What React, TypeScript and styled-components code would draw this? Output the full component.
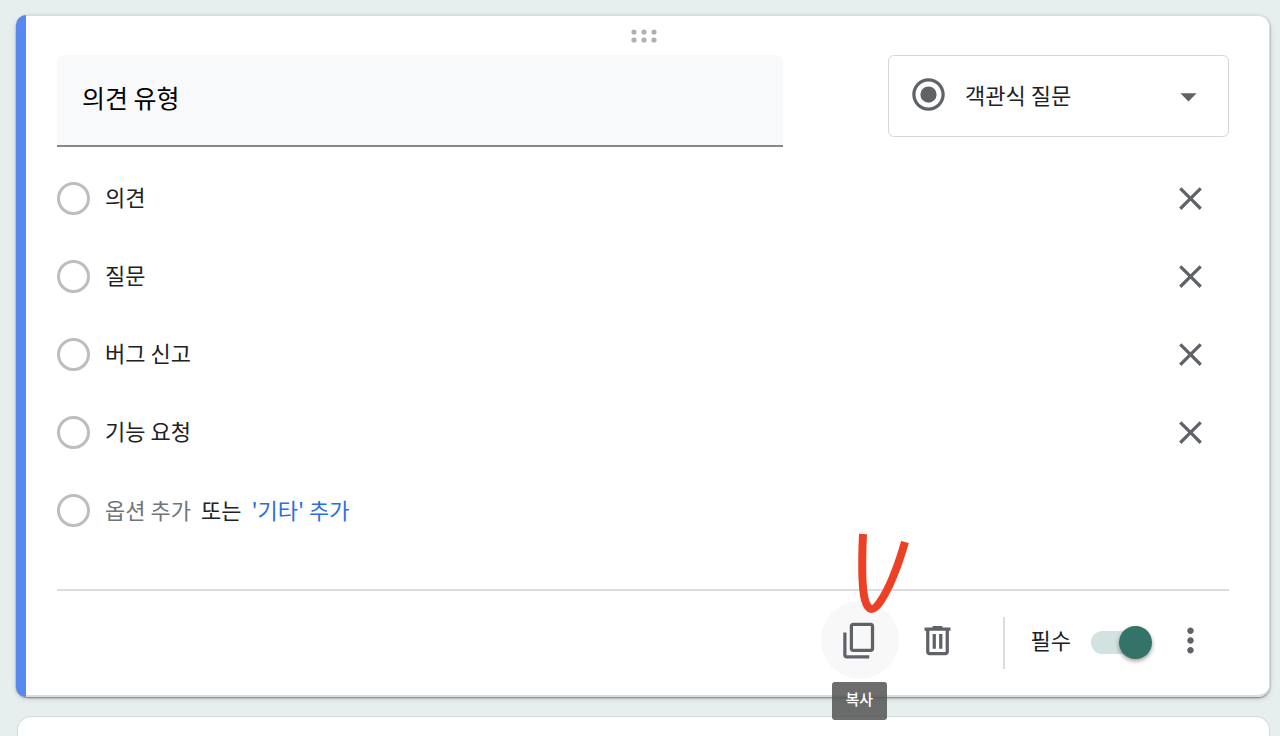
import React, { useState } from "react";
import styled, { createGlobalStyle } from "styled-components";

const GlobalStyle = createGlobalStyle`
  *, *::before, *::after { box-sizing: border-box; }
  body {
    margin: 0;
    background: #e7efee;
    color: #202124;
    font-family: "Noto Sans CJK KR", "Noto Sans", sans-serif;
    font-size: 22px;
    line-height: 32px;
  }
  button, input, select { font: inherit; color: inherit; margin: 0; }
`;

const Page = styled.main`
  display: flex;
  flex-direction: column;
  gap: 19px;
  min-height: 100vh;
  padding: 15px 10px 0 16px;
`;

const Card = styled.section`
  display: flex;
  border-radius: 12px;
  box-shadow: 0 1px 2px rgba(0, 0, 0, 0.45), 0 2px 6px rgba(0, 0, 0, 0.12);
`;

const Stripe = styled.div`
  flex: none;
  width: 10px;
  border-radius: 12px 0 0 12px;
  background: #5688ef;
`;

const CardBody = styled.div`
  flex: 1;
  min-width: 0;
  padding: 0 40px 16px 31px;
  background: #fff;
  border: solid #dadce0;
  border-width: 1px 1px 2px 0;
  border-radius: 0 12px 12px 0;
`;

const NextCard = styled.section`
  flex: 1;
  background: #fff;
  border: 1px solid #d5d9da;
  border-bottom: 0;
  border-radius: 14px 14px 0 0;
  margin-left: 1px;
`;

const DragHandle = styled.div`
  display: flex;
  justify-content: center;
  height: 39px;
  padding: 12px 0 0 2px;
`;

const QuestionRow = styled.div`
  display: flex;
  align-items: flex-start;
  gap: 105px;
`;

const TitleInput = styled.input`
  flex: 1;
  min-width: 0;
  height: 92px;
  padding: 0 25px 6px;
  border: 0;
  border-bottom: 2px solid #85888c;
  border-radius: 6px 6px 0 0;
  outline: 0;
  background: #f8f9fa;
  color: #000;
  font-size: 25px;
`;

const TypePicker = styled.div`
  display: grid;
  flex: none;
  width: 341px;
  align-items: center;

  > * { grid-area: 1 / 1; }
  > svg { margin: 0 21px 3px; pointer-events: none; }
  > svg:last-child { justify-self: end; margin-bottom: 0; }
`;

const TypeSelect = styled.select`
  width: 100%;
  height: 82px;
  padding: 0 60px 4px 76px;
  appearance: none;
  border: 1px solid #d5d7db;
  border-radius: 6px;
  background: #fff;
`;

const OptionList = styled.ul`
  margin: 12px 0 40px;
  padding: 0;
  list-style: none;
`;

const OptionRow = styled.li`
  display: flex;
  align-items: center;
  height: 78px;
`;

const Radio = styled.input`
  flex: none;
  width: 33px;
  height: 33px;
  appearance: none;
  border: 3px solid #bdbdbd;
  border-radius: 50%;
`;

const OptionInput = styled.input`
  flex: 1;
  min-width: 0;
  height: 40px;
  margin-left: 15px;
  padding: 0 0 4px;
  border: 0;
  outline: 0;
  background: none;
`;

const AddOptions = styled.div`
  display: flex;
  gap: 10px;
  margin-left: 15px;
  padding-bottom: 2px;
`;

const TextButton = styled.button<{ $tone: string }>`
  padding: 0;
  border: 0;
  background: none;
  color: ${(p) => p.$tone};
  cursor: pointer;
`;

const IconButton = styled.button<{ $active?: boolean }>`
  display: flex;
  flex: none;
  align-items: center;
  justify-content: center;
  width: 78px;
  height: 78px;
  padding: 0;
  border: 0;
  border-radius: 50%;
  background: ${(p) => (p.$active ? "#f8f8f8" : "none")};
  cursor: pointer;
`;

const Footer = styled.footer`
  display: flex;
  align-items: center;
  justify-content: flex-end;
  padding-top: 10px;
  border-top: 2px solid #dadce0;
`;

const CopyWrap = styled.div`
  position: relative;
`;

const Tooltip = styled.span`
  position: absolute;
  top: 81px;
  left: 11px;
  z-index: 1;
  padding: 1px 14px 5px;
  border-radius: 3px;
  background: rgba(84, 84, 84, 0.85);
  color: #fff;
  font-size: 15px;
  font-weight: 500;
  white-space: nowrap;
`;

const PenMark = styled.svg`
  position: absolute;
  top: -71px;
  left: 29px;
  z-index: 1;
  pointer-events: none;
`;

const Separator = styled.div`
  width: 2px;
  height: 52px;
  margin: 6px 26px 0;
  background: #dadce0;
`;

const RequiredLabel = styled.label`
  display: flex;
  align-items: center;
  gap: 20px;
`;

const Switch = styled.input`
  display: flex;
  align-items: center;
  width: 60px;
  height: 33px;
  appearance: none;

  &::before {
    content: "";
    flex: none;
    width: 50px;
    height: 23px;
    border-radius: 12px;
    background: #d1e2e0;
  }
  &::after {
    content: "";
    flex: none;
    width: 33px;
    height: 33px;
    margin-left: ${(p) => (p.checked ? "-22px" : "-50px")};
    border-radius: 50%;
    background: #33736a;
    box-shadow: 0 2px 4px rgba(0, 0, 0, 0.4);
  }
`;

const LabelText = styled.span`
  padding-bottom: 3px;
`;

const SwitchSlot = styled.span`
  padding-top: 5px;
`;

const paths = {
  close:
    "M19 6.41L17.59 5 12 10.59 6.41 5 5 6.41 10.59 12 5 17.59 6.41 19 12 13.41 17.59 19 19 17.59 13.41 12z",
  copy:
    "M19 1H8C6.9 1 6 1.9 6 3v14c0 1.1.9 2 2 2h11c1.1 0 2-.9 2-2V3c0-1.1-.9-2-2-2zm0 16H8V3h11v14zM4 7H2v14c0 1.1.9 2 2 2h14v-2H4V7z",
  trash:
    "M15 4V3H9v1H4v2h1v13c0 1.1.9 2 2 2h10c1.1 0 2-.9 2-2V6h1V4h-5zm2 15H7V6h10v13zM9 8h2v9H9zM13 8h2v9h-2z",
  more:
    "M12 8c1.1 0 2-.9 2-2s-.9-2-2-2-2 .9-2 2 .9 2 2 2zm0 2c-1.1 0-2 .9-2 2s.9 2 2 2 2-.9 2-2-.9-2-2-2zm0 6c-1.1 0-2 .9-2 2s.9 2 2 2 2-.9 2-2-.9-2-2-2z",
  radio:
    "M12 7a5 5 0 100 10 5 5 0 000-10zm0-5C6.48 2 2 6.48 2 12s4.48 10 10 10 10-4.48 10-10S17.52 2 12 2zm0 18c-4.42 0-8-3.58-8-8s3.58-8 8-8 8 3.58 8 8-3.58 8-8 8z",
  caret: "M7 10l5 5 5-5z",
};

const Icon = ({ name }: { name: keyof typeof paths }) => (
  <svg width="39" height="39" viewBox="0 0 24 24" fill="#5f6368" aria-hidden="true">
    <path d={paths[name]} />
  </svg>
);

const initialOptions = ["의견", "질문", "버그 신고", "기능 요청"];

export default function App() {
  const [title, setTitle] = useState("의견 유형");
  const [options, setOptions] = useState(initialOptions);
  const [required, setRequired] = useState(true);

  const rename = (index: number, value: string) =>
    setOptions(options.map((o, i) => (i === index ? value : o)));

  return (
    <>
      <GlobalStyle />
      <Page>
        <Card>
          <Stripe />
          <CardBody>
            <DragHandle>
              <svg width="26" height="16" viewBox="0 0 26 16" fill="#b0b0b0" aria-hidden="true">
                {[3, 13, 23].map((x) =>
                  [4, 12].map((y) => <circle key={`${x}-${y}`} cx={x} cy={y} r="2.6" />)
                )}
              </svg>
            </DragHandle>
            <QuestionRow>
              <TitleInput
                aria-label="질문"
                value={title}
                onChange={(e) => setTitle(e.target.value)}
              />
              <TypePicker>
                <TypeSelect aria-label="질문 유형">
                  <option>객관식 질문</option>
                </TypeSelect>
                <Icon name="radio" />
                <Icon name="caret" />
              </TypePicker>
            </QuestionRow>
            <OptionList>
              {options.map((option, i) => (
                <OptionRow key={i}>
                  <Radio type="radio" disabled aria-label={option} />
                  <OptionInput
                    aria-label={`옵션 ${i + 1}`}
                    value={option}
                    onChange={(e) => rename(i, e.target.value)}
                  />
                  <IconButton
                    type="button"
                    aria-label="옵션 삭제"
                    onClick={() => setOptions(options.filter((_, n) => n !== i))}
                  >
                    <Icon name="close" />
                  </IconButton>
                </OptionRow>
              ))}
              <OptionRow>
                <Radio type="radio" disabled aria-label="옵션 추가" />
                <AddOptions>
                  <TextButton
                    type="button"
                    $tone="#70757a"
                    onClick={() => setOptions([...options, `옵션 ${options.length + 1}`])}
                  >
                    옵션 추가
                  </TextButton>
                  <span>또는</span>
                  <TextButton
                    type="button"
                    $tone="#2a6fe0"
                    onClick={() => setOptions([...options, "기타"])}
                  >
                    '기타' 추가
                  </TextButton>
                </AddOptions>
              </OptionRow>
            </OptionList>
            <Footer>
              <CopyWrap>
                <IconButton type="button" $active aria-describedby="copy-tip" aria-label="복사">
                  <Icon name="copy" />
                </IconButton>
                <Tooltip id="copy-tip" role="tooltip">복사</Tooltip>
                <PenMark width="64" height="86" viewBox="0 0 64 86" fill="none" aria-hidden="true">
                  <path
                    d="M13 4C12 26 11 56 15 70C18 81 23 82 30 72C39 59 48 36 55 12"
                    stroke="#ec4125"
                    strokeWidth="8"
                  />
                </PenMark>
              </CopyWrap>
              <IconButton type="button" aria-label="삭제">
                <Icon name="trash" />
              </IconButton>
              <Separator />
              <RequiredLabel>
                <LabelText>필수</LabelText>
                <SwitchSlot>
                  <Switch
                    type="checkbox"
                    role="switch"
                    checked={required}
                    onChange={(e) => setRequired(e.target.checked)}
                  />
                </SwitchSlot>
              </RequiredLabel>
              <IconButton type="button" aria-label="옵션 더보기">
                <Icon name="more" />
              </IconButton>
            </Footer>
          </CardBody>
        </Card>
        <NextCard />
      </Page>
    </>
  );
}
